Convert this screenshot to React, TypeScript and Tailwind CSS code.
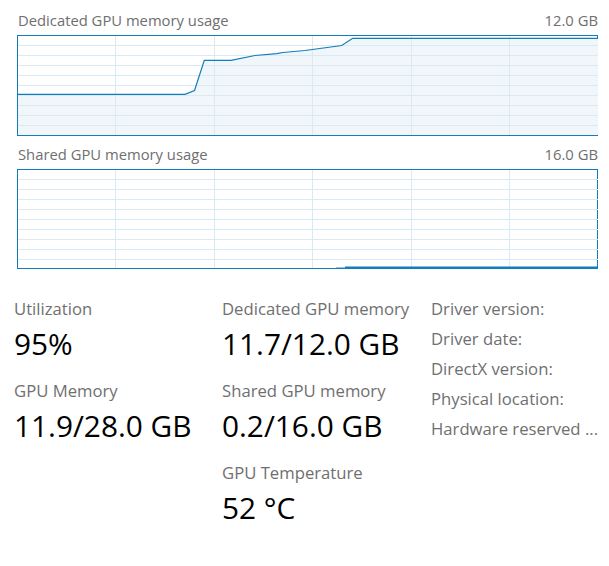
import React from "react";

const FONT = { fontFamily: '"Open Sans", "Noto Sans", sans-serif' };

const W = 580;
const H = 99;
const vLines = [97, 196, 294, 393, 491];
const hLines = [9, 19, 29, 39, 49, 59, 69, 79, 89];

function Grid() {
  return (
    <>
      {vLines.map((x) => (
        <line key={"v" + x} x1={x + 0.5} y1={0} x2={x + 0.5} y2={H} stroke="#d9eaf4" strokeWidth={1} />
      ))}
      {hLines.map((y) => (
        <line key={"h" + y} x1={0} y1={y + 0.5} x2={W} y2={y + 0.5} stroke="#d9eaf4" strokeWidth={1} />
      ))}
    </>
  );
}

const pts: [number, number][] = [
  [-1, 58.3],
  [167, 58.3],
  [176.5, 54.5],
  [186.3, 24.3],
  [213, 24.3],
  [237, 19.5],
  [258.7, 17.7],
  [265, 16.5],
  [287, 14.5],
  [323.7, 9.5],
  [334.7, 2.3],
  [581, 2.3],
];

function Chart1() {
  const line = pts.map((p) => p.join(",")).join(" ");
  const area = `${line} 581,${H + 1} -1,${H + 1}`;
  return (
    <div className="border border-[#117dbb] h-[101px] bg-white">
      <svg width={W} height={H} viewBox={`0 0 ${W} ${H}`} className="block">
        <polygon points={area} fill="#f1f6fa" />
        <Grid />
        <polyline points={line} fill="none" stroke="#117dbb" strokeWidth={1.2} />
      </svg>
    </div>
  );
}

function Chart2() {
  return (
    <div className="border border-[#117dbb] h-[100px] bg-white">
      <svg width={W} height={98} viewBox={`0 0 ${W} 98`} className="block">
        <Grid />
        <rect x={327} y={96.5} width={254} height={1.5} fill="#117dbb" />
        <rect x={318} y={97} width={9} height={1} fill="#9cc3df" />
      </svg>
    </div>
  );
}

function Stat({ label, value }: { label: string; value: string }) {
  return (
    <div className="flex flex-col">
      <div className="text-[16.7px] leading-[22px] text-[#6f6f6f] whitespace-nowrap">{label}</div>
      <div className="mt-[6px] text-[29.8px] leading-[36px] text-black whitespace-nowrap">{value}</div>
    </div>
  );
}

export default function App() {
  return (
    <div className="w-[609px] h-[566px] bg-white overflow-hidden" style={FONT}>
      <div className="pl-[17px] pr-[11px] pt-[10px]">
        <div className="flex justify-between text-[14.8px] leading-[20px] text-[#6f6f6f] pl-px">
          <span>Dedicated GPU memory usage</span>
          <span>12.0 GB</span>
        </div>
        <div className="mt-[5px]">
          <Chart1 />
        </div>
        <div className="mt-[8px] flex justify-between text-[14.8px] leading-[20px] text-[#6f6f6f] pl-px">
          <span>Shared GPU memory usage</span>
          <span>16.0 GB</span>
        </div>
        <div className="mt-[5px]">
          <Chart2 />
        </div>
      </div>
      <div className="mt-[29px] pl-[14px] grid grid-cols-[208px_209px_1fr]">
        <div className="flex flex-col gap-[18px]">
          <Stat label="Utilization" value="95%" />
          <Stat label="GPU Memory" value="11.9/28.0 GB" />
        </div>
        <div className="flex flex-col gap-[18px]">
          <Stat label="Dedicated GPU memory" value="11.7/12.0 GB" />
          <Stat label="Shared GPU memory" value="0.2/16.0 GB" />
          <Stat label="GPU Temperature" value="52 °C" />
        </div>
        <div className="flex flex-col -mt-[4px] text-[16.7px] leading-[30px] text-[#6f6f6f] whitespace-nowrap">
          <div>Driver version:</div>
          <div>Driver date:</div>
          <div>DirectX version:</div>
          <div>Physical location:</div>
          <div>Hardware reserved ...</div>
        </div>
      </div>
    </div>
  );
}
